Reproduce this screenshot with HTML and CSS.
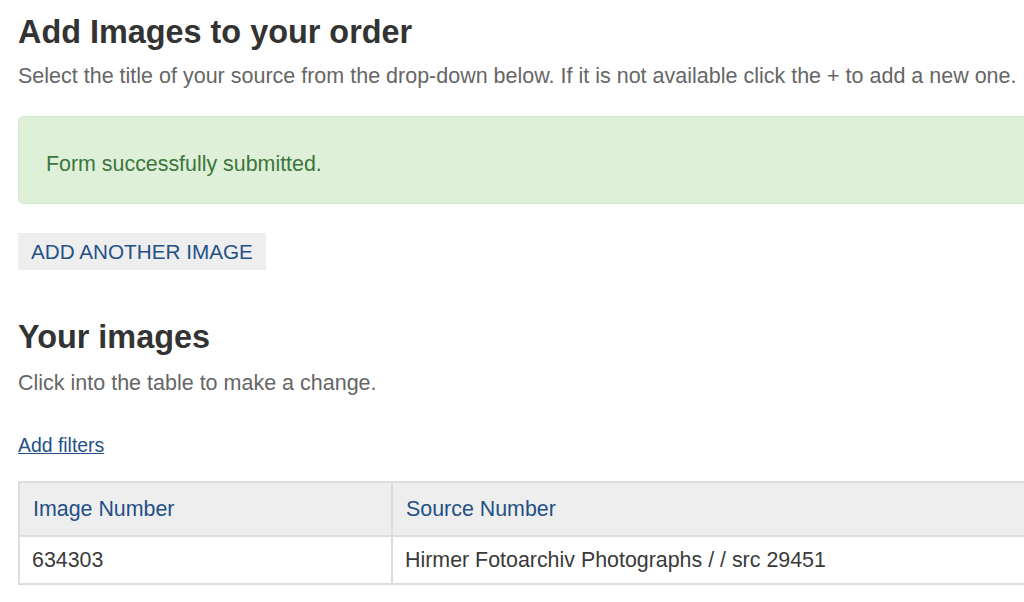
FILE: index.html
```html
<!doctype html>
<html lang="en">
	<head>
		<meta charset="UTF-8">
		<title>Add Images to your order</title>
		<link rel="stylesheet" href="styles.css">
	</head>
	<body>
		<div class="page">
			<h2 class="title">Add Images to your order</h2>
			<p class="lead">Select the title of your source from the drop-down below. If it is not available click the + to add a new one.</p>

			<div class="alert">Form successfully submitted.</div>

			<button class="btn" type="button">ADD ANOTHER IMAGE</button>

			<h2 class="title title-images">Your images</h2>
			<p class="lead">Click into the table to make a change.</p>

			<a class="filters" href="#">Add filters</a>

			<table class="grid">
				<thead>
					<tr>
						<th class="col-num">Image Number</th>
						<th>Source Number</th>
					</tr>
				</thead>
				<tbody>
					<tr>
						<td class="col-num">634303</td>
						<td>Hirmer Fotoarchiv Photographs / / src 29451</td>
					</tr>
				</tbody>
			</table>
		</div>
	</body>
</html>
```

FILE: styles.css
```css
html,body{
	margin:0; padding:0;
}
html{
	background:#fff; overflow:hidden;
}
body{
	font-family:"Liberation Sans", Arial, sans-serif; font-size:21.4px; color:#333; line-height:30px;
}
.page{
	width:1100px; padding:0 0 0 18px;
}
.title{
	font-size:32.4px; font-weight:bold; margin:0; padding-top:12px; line-height:40px; color:#333;
}
.lead{
	color:#666; margin:9px 0 0 0; line-height:30px; font-size:21.5px;
}
.alert{
	margin-top:25px; height:88px; box-sizing:border-box; padding:8px 27px 0 27px;
	display:flex; align-items:center;
	background:#dff0d8; border:1px solid #d6e9c6; border-radius:5px; color:#3c763d;
}
.btn{
	display:block; margin-top:29px; height:37px; padding:0 13px;
	background:#eee; border:0; border-radius:0; color:#245088;
	font-family:inherit; font-size:20.7px;
}
.title-images{
	margin-top:47px; padding-top:0;
}
.title-images + .lead{
	margin-top:11px;
}
.filters{
	display:block; width:fit-content; margin-top:34px; line-height:26px; color:#245088; font-size:19.4px;
}
.grid{
	margin-top:23px; width:1100px; border-collapse:collapse; border:2px solid #ddd;
}
.grid th,.grid td{
	text-align:left; border:2px solid #ddd; padding:0 13px; font-weight:normal;
}
.grid th{
	background:#eee; color:#245088; height:52px;
}
.grid td{
	height:46px; color:#3a3a3a; padding-left:12px;
}
.grid .col-num{
	width:345px;
}
```
